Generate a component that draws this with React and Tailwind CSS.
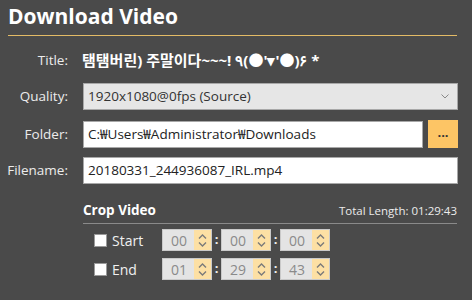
import React from "react";

const font = { fontFamily: '"Open Sans", "Noto Sans CJK KR", sans-serif' };

function Spin({ value }) {
  return (
    <div className="flex h-[22px] w-[50px] border border-[#c9c9c9] bg-[#e4e4e4]">
      <div className="flex flex-1 items-center pl-[8px] text-[14px] text-[#8a8a8a]">{value}</div>
      <div className="flex w-[17px] flex-col items-center justify-center gap-[3px] bg-[#fde0a4]">
        <svg width="9" height="5" viewBox="0 0 9 5">
          <path d="M1 4.5 L4.5 1 L8 4.5" fill="none" stroke="#7a7a7a" strokeWidth="1.4" />
        </svg>
        <svg width="9" height="5" viewBox="0 0 9 5">
          <path d="M1 0.5 L4.5 4 L8 0.5" fill="none" stroke="#7a7a7a" strokeWidth="1.4" />
        </svg>
      </div>
    </div>
  );
}

function Colon() {
  return <div className="flex w-[9px] justify-center text-[13px] font-bold text-[#f0f0f0]">:</div>;
}

function TimeRow({ label, vals, className }) {
  return (
    <div className={"flex h-[22px] items-center " + className}>
      <div className="ml-[11px] h-[13px] w-[13px] border border-[#9a9a9a] bg-white" />
      <div className="ml-[5px] w-[50px] text-[14px] text-[#f0f0f0]">{label}</div>
      <Spin value={vals[0]} />
      <Colon />
      <Spin value={vals[1]} />
      <Colon />
      <Spin value={vals[2]} />
    </div>
  );
}

export default function App() {
  return (
    <div className="h-[300px] w-[472px] overflow-hidden bg-[#4a4a4a] text-[#ececec]" style={font}>
      <div className="ml-[8px] mr-[15px] h-[36px] border-b border-[#e3bb66] pt-[6px]">
        <div className="text-[21px] font-bold leading-[21px] text-white">Download Video</div>
      </div>

      <div className="mt-[12px] flex h-[24px] items-center">
        <div className="w-[68px] text-right text-[13.5px] text-[#ececec]">Title:</div>
        <div className="ml-[14px] text-[15px] font-bold text-white">
          탬탬버린) 주말이다~~~! ٩(●'▾'●)۶ *
        </div>
      </div>

      <div className="mt-[11px] flex h-[27px] items-center">
        <div className="w-[68px] text-right text-[13.5px] text-[#ececec]">Quality:</div>
        <div className="ml-[15px] mr-[14px] flex h-[27px] flex-1 items-center justify-between border border-[#a8a8a8] bg-[#e6e6e6] pl-[4px] pr-[8px] text-[13.5px] text-[#333]">
          <span>1920x1080@0fps (Source)</span>
          <svg width="8" height="5" viewBox="0 0 8 5">
            <path d="M0.5 0.5 L4 4 L7.5 0.5" fill="none" stroke="#888" strokeWidth="1" />
          </svg>
        </div>
      </div>

      <div className="mt-[10px] flex h-[28px] items-center">
        <div className="w-[68px] text-right text-[13.5px] text-[#ececec]">Folder:</div>
        <div className="ml-[15px] flex h-[27px] flex-1 items-center border border-[#a8a8a8] bg-white pl-[4px] text-[13.5px] text-[#222]">
          C:₩Users₩Administrator₩Downloads
        </div>
        <div className="ml-[5px] mr-[14px] flex h-[28px] w-[30px] items-center justify-center bg-[#fdc565] pb-[4px] text-[13px] font-bold leading-none text-[#333]">
          ...
        </div>
      </div>

      <div className="mt-[9px] flex h-[27px] items-center">
        <div className="w-[68px] text-right text-[13.5px] text-[#ececec]">Filename:</div>
        <div className="ml-[15px] mr-[14px] flex h-[27px] flex-1 items-center border border-[#a8a8a8] bg-white pl-[4px] text-[13.5px] text-[#222]">
          20180331_244936087_IRL.mp4
        </div>
      </div>

      <div className="ml-[83px] mr-[15px] mt-[14px] flex h-[26px] items-center justify-between border-b border-[#8a8a8a]">
        <span className="text-[13.5px] font-bold text-white">Crop Video</span>
        <span className="text-[11.5px] text-[#ececec]">Total Length: 01:29:43</span>
      </div>

      <div className="ml-[83px]">
        <TimeRow className="mt-[5px]" label="Start" vals={["00", "00", "00"]} />
        <TimeRow className="mt-[7px]" label="End" vals={["01", "29", "43"]} />
      </div>
    </div>
  );
}
